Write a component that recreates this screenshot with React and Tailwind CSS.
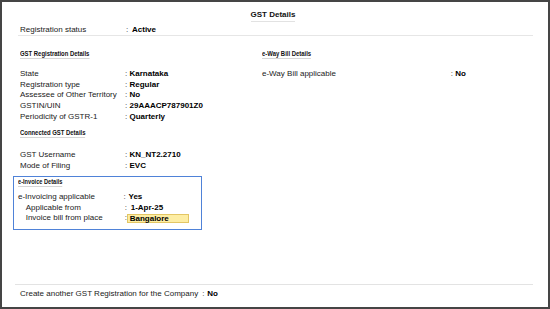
import React from "react";

const F = { fontFamily: '"Liberation Sans", Arial, sans-serif' };

function Section({ children, small }) {
  return (
    <div className="h-[10px] leading-[10px]">
      <span
        className={
          "inline-block origin-left border-b border-[#d6d6d6] font-bold text-[#111] whitespace-nowrap " +
          (small
            ? "h-[9px] scale-x-[0.75] text-[7.5px] leading-[8px]"
            : "h-[10px] scale-x-[0.74] text-[8px] leading-[10px]")
        }
      >
        {children}
      </span>
    </div>
  );
}

function Row({ label, value, lw = 105, cw = 4.5, pl = 0, children }) {
  return (
    <div className="flex h-[10.7px] items-center leading-[10.7px]" style={{ paddingLeft: pl }}>
      <span className="shrink-0 text-[#1a1a1a]" style={{ width: lw }}>
        {label}
      </span>
      <span className="shrink-0 text-[#333]" style={{ width: cw }}>
        :
      </span>
      {children ? children : <span className="font-bold text-black">{value}</span>}
    </div>
  );
}

export default function App() {
  return (
    <div
      className="flex h-[309px] w-[550px] flex-col border-2 border-[#454545] bg-white text-[8px]"
      style={F}
    >
      {/* title */}
      <div className="flex justify-center pr-[4px] pt-[8px]">
        <span className="inline-block h-[12px] border-b border-[#e2e2e2] pb-[2px] text-[8px] font-bold leading-[10px] text-[#111]">
          GST Details
        </span>
      </div>
      <div className="pl-[18px]">
        <div className="mt-[3px] flex h-[10px] items-center leading-[10px]">
          <span className="w-[106px] shrink-0 text-[#1a1a1a]">Registration status</span>
          <span className="w-[6px] shrink-0 text-[#333]">:</span>
          <span className="font-bold text-black">Active</span>
        </div>
      </div>
      <div className="ml-[16px] mr-[15px] h-px bg-[#e6e6e6]" />

      {/* body */}
      <div className="flex flex-1">
        <div className="w-[260px] shrink-0 pl-[11px]">
          <div className="mt-[13px] pl-[7px]">
            <Section>GST Registration Details</Section>
          </div>
          <div className="mt-[10px] h-[54px] pl-[7px]">
            <Row label="State" value="Karnataka" />
            <Row label="Registration type" value="Regular" />
            <Row label="Assessee of Other Territory" value="No" />
            <Row label="GSTIN/UIN" value="29AAACP787901Z0" />
            <Row label="Periodicity of GSTR-1" value="Quarterly" />
          </div>
          <div className="mt-[5px] pl-[7px]">
            <Section>Connected GST Details</Section>
          </div>
          <div className="mt-[12px] h-[21px] pl-[7px]">
            <Row label="GST Username" value="KN_NT2.2710" />
            <Row label="Mode of Filing" value="EVC" />
          </div>

          <div className="mt-[5px] h-[54px] w-[189px] border border-[#4f82d8] pl-[4px]">
            <div className="h-[9px] leading-[8px]">
              <Section small>e-Invoice Details</Section>
            </div>
            <div className="mt-[6px]">
              <Row label="e-Invoicing applicable" value="Yes" lw={105.5} cw={5} />
              <Row label="Applicable from" value="1-Apr-25" lw={99} cw={6} pl={7.7} />
              <Row label="Invoice bill from place" lw={99} cw={2} pl={7.7}>
                <span className="flex h-[9.5px] w-[62px] items-center border border-[#e3c664] bg-[#fdeda3] pl-[2px] font-bold leading-[9px] text-black">
                  Bangalore
                </span>
              </Row>
            </div>
          </div>
        </div>

        <div className="flex-1">
          <div className="mt-[13px]">
            <Section>e-Way Bill Details</Section>
          </div>
          <div className="mt-[10px]">
            <Row label="e-Way Bill applicable" value="No" lw={188.7} cw={4.5} />
          </div>
        </div>
      </div>

      {/* bottom */}
      <div className="ml-[13px] mr-[15px] h-[23px] border-t border-[#e3e3e3] pl-[5px] pt-[4px]">
        <div className="flex h-[10.7px] items-center leading-[10.7px]">
          <span className="text-[#1a1a1a]">Create another GST Registration for the Company</span>
          <span className="ml-[4px] w-[5px] text-[#333]">:</span>
          <span className="font-bold text-black">No</span>
        </div>
      </div>
    </div>
  );
}
